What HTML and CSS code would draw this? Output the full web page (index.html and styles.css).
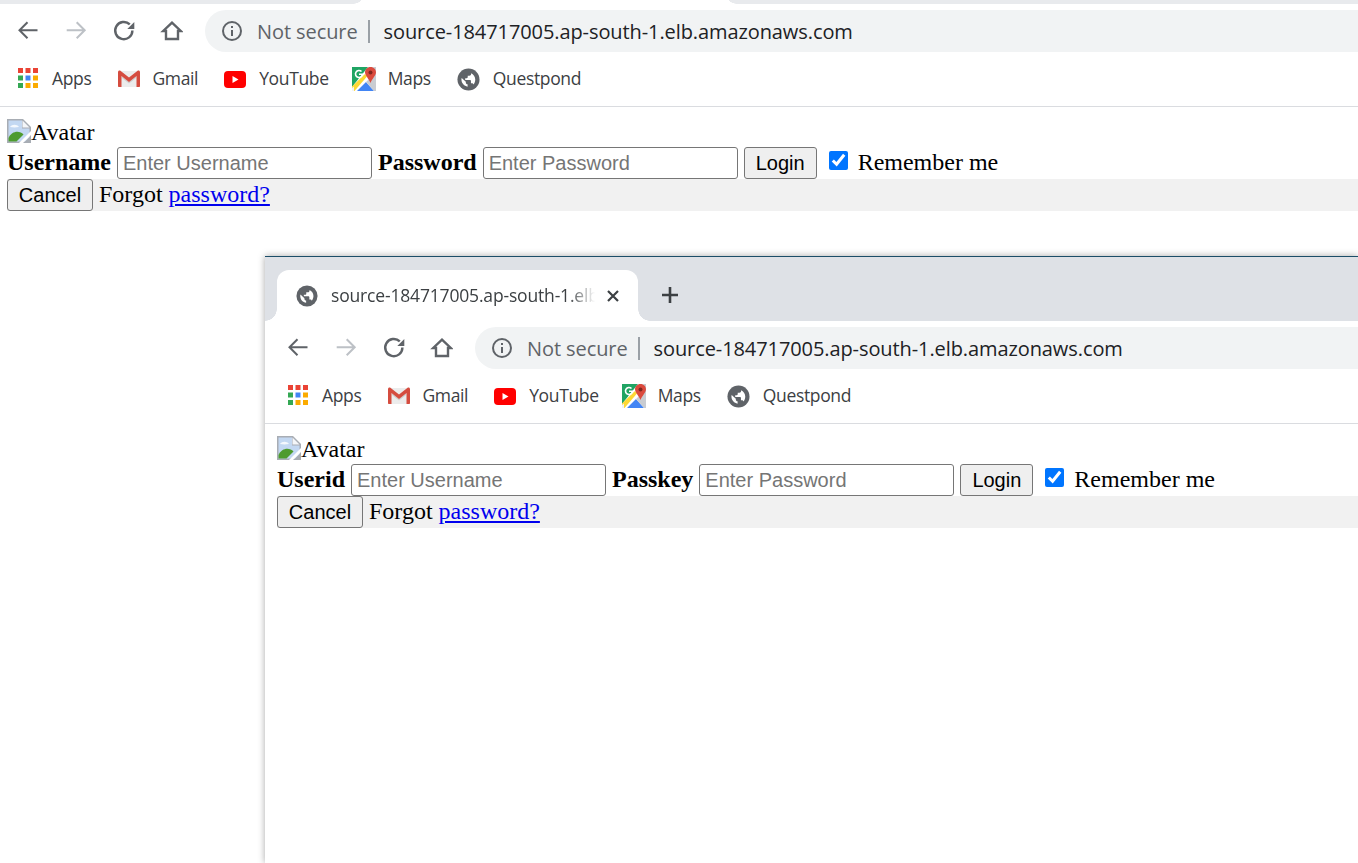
FILE: index.html
```html
<!DOCTYPE html>
<html lang="en">
<head>
<meta charset="utf-8">
<title>Login comparison</title>
<link rel="stylesheet" href="styles.css">
</head>
<body>
<svg class="sprites" aria-hidden="true">
  <symbol id="i-back" viewBox="0 0 24 24"><path d="M22.5 11.25H4.5M12.5 3.3l-8 7.95 8 7.95" fill="none" stroke="currentColor" stroke-width="2"/></symbol>
  <symbol id="i-forward" viewBox="0 0 24 24"><path d="M3.7 11.25h18M13.7 3.3l8 7.95-8 7.95" fill="none" stroke="currentColor" stroke-width="2"/></symbol>
  <symbol id="i-reload" viewBox="0 0 24 24"><path d="M21.400 11.500a8.600 8.600 0 1 1-2.600-6.100" fill="none" stroke="currentColor" stroke-width="2.400"/><path d="M23.300 3v7h-7z" fill="currentColor"/></symbol>
  <symbol id="i-home" viewBox="0 0 24 24"><path d="M13 3.600 4.200 12H7v8h12v-8h2.800z" fill="none" stroke="currentColor" stroke-width="2.400"/></symbol>
  <symbol id="i-info" viewBox="0 0 22 22"><circle cx="11" cy="11" r="9" fill="none" stroke="currentColor" stroke-width="2"/><path d="M10 10h2v6h-2zM10 6h2v2h-2z" fill="currentColor"/></symbol>
  <symbol id="i-globe" viewBox="0 0 24 24"><circle cx="12" cy="12" r="11.500" fill="currentColor"/><path transform="translate(2.400 2.400) scale(.8)" d="M10.800 21.300c-4.200-.6-8-4.200-8-9.300 0-.7.100-1.400.3-2.100L8.500 15v1.100c0 1.100.9 2.100 2.300 2.100zM18.500 18.500c-.3-.9-1.100-1.600-2.200-1.600h-1.100v-3.300c0-.6-.5-1.100-1.100-1.100H7.700v-2.200h2.200c.6 0 1.100-.5 1.100-1.100V7h2.200c1.200 0 2.200-1 2.200-2.200v-1.100c3 1.300 5.400 4.400 5.400 8.300 0 2.500-.9 4.700-2.300 6.500z" fill="#fff"/></symbol>
  <symbol id="i-apps" viewBox="0 0 20 20"><path fill="#ea4335" d="M0 0h5v5H0zM7.500 0h5v5h-5zM15 0h5v5h-5z"/><path fill="#34a853" d="M0 7.500h5v5H0zM0 15h5v5H0z"/><path fill="#4285f4" d="M7.500 7.500h5v5h-5z"/><path fill="#fbab00" d="M15 7.500h5v5h-5zM7.500 15h5v5h-5zM15 15h5v5h-5z"/></symbol>
  <symbol id="i-gmail" viewBox="0 0 22 18"><path fill="#ececec" d="M1 1h20v16H1z"/><path fill="#cfcfcf" d="M4 6l7 6 7-6v2l-7 5.500L4 8z"/><path fill="#d54c3f" d="M0 2.200C0 .7 1.500.2 2.700 1L11 7.500 19.300 1C20.500.2 22 .7 22 2.200V16c0 .6-.4 1-1 1h-2.500V6L11 12 3.500 6v11H1c-.6 0-1-.4-1-1z"/></symbol>
  <symbol id="i-youtube" viewBox="0 0 22 17"><rect width="22" height="17" rx="4" fill="#f00"/><path d="M8.500 5l6 3.500-6 3.500z" fill="#fff"/></symbol>
  <symbol id="i-maps" viewBox="0 0 24 24"><path fill="#1fa463" d="M0 0h16L0 20z"/><path fill="#4285f4" d="M5 24l9-9 8 9z"/><path fill="#c9ccd1" d="M16 0h8v24h-2l-8-9 6-6z"/><path fill="#fdd835" d="M0 19.500 13 7l2 2.500L2.500 24H0z"/><path fill="#f1f3f4" d="M0 21l2-1.500V24H0z"/><path fill="#db4a3d" d="M18.500 0c-3 0-5.500 2.400-5.500 5.300 0 3.500 4 6.500 5.500 10.700 1.500-4.200 5.500-7.200 5.500-10.700C24 2.400 21.500 0 18.500 0z"/><circle cx="18.500" cy="5.500" r="2" fill="#80261e"/><path fill="none" stroke="#fff" stroke-width="1.600" d="M9.500 4.500a3.500 3.500 0 1 0 1 2.700H7"/></symbol>
  <symbol id="i-image" viewBox="0 0 24 24"><path fill="#a8adb4" d="M0 0h16l8 8v16H0z"/><path fill="#c3d8f2" d="M1.500 1.500h13.500v8h7.500V18L18 22.500H1.500z"/><path fill="#f4f6f9" d="M15.500 1.500v7h7z"/><path fill="#f4f8fd" d="M3 8c2-3 7-3 9 0-3 .6-6 .6-9 0z"/><path fill="#4e9b2f" d="M1.500 22.500V19c3-7 11-8 15-3.500l-7 7z"/><path fill="#fff" d="M12 24l12-12v4l-8 8z"/></symbol>
</svg>

<section class="window window-back">
  <div class="tabstrip tabstrip-cropped"><div class="tab tab-cropped"></div></div>
  <div class="toolbar">
    <button class="nav"><svg class="nav-icon"><use href="#i-back"/></svg></button>
    <button class="nav nav-off"><svg class="nav-icon"><use href="#i-forward"/></svg></button>
    <button class="nav"><svg class="nav-icon"><use href="#i-reload"/></svg></button>
    <button class="nav"><svg class="nav-icon"><use href="#i-home"/></svg></button>
    <div class="omnibox">
      <svg class="info-icon"><use href="#i-info"/></svg>
      <span class="secure">Not secure</span>
      <span class="sep"></span>
      <span class="url">source-184717005.ap-south-1.elb.amazonaws.com</span>
    </div>
  </div>
  <nav class="bookmarks">
    <a class="mark"><svg class="m-apps"><use href="#i-apps"/></svg>Apps</a>
    <a class="mark"><svg class="m-gmail"><use href="#i-gmail"/></svg>Gmail</a>
    <a class="mark"><svg class="m-youtube"><use href="#i-youtube"/></svg>YouTube</a>
    <a class="mark"><svg class="m-maps"><use href="#i-maps"/></svg>Maps</a>
    <a class="mark"><svg class="m-globe"><use href="#i-globe"/></svg>Questpond</a>
  </nav>
  <main class="page">
    <div class="avatar"><svg class="broken"><use href="#i-image"/></svg>Avatar</div>
    <div class="fields">
      <b class="label">Username</b> <input class="text" type="text" placeholder="Enter Username"> <b class="label">Password</b> <input class="text" type="password" placeholder="Enter Password"> <button class="btn">Login</button> <label class="remember"><input class="check" type="checkbox" checked> <span class="remember-text">Remember me</span></label>
    </div>
    <div class="footer-row">
      <button class="btn btn-cancel">Cancel</button> <span class="forgot">Forgot <a class="link" href="#">password?</a></span>
    </div>
  </main>
</section>

<section class="window window-front">
  <div class="tabstrip">
    <div class="tab">
      <svg class="tab-globe"><use href="#i-globe"/></svg>
      <span class="tab-title">source-184717005.ap-south-1.elb.amazonaws.com</span>
      <svg class="tab-close" viewBox="0 0 12 12"><path d="M1 1l10 10M11 1 1 11" stroke="currentColor" stroke-width="2.200"/></svg>
    </div>
    <svg class="tab-new" viewBox="0 0 18 18"><path d="M9 1v16M1 9h16" stroke="currentColor" stroke-width="2.600"/></svg>
  </div>
  <div class="toolbar">
    <button class="nav"><svg class="nav-icon"><use href="#i-back"/></svg></button>
    <button class="nav nav-off"><svg class="nav-icon"><use href="#i-forward"/></svg></button>
    <button class="nav"><svg class="nav-icon"><use href="#i-reload"/></svg></button>
    <button class="nav"><svg class="nav-icon"><use href="#i-home"/></svg></button>
    <div class="omnibox">
      <svg class="info-icon"><use href="#i-info"/></svg>
      <span class="secure">Not secure</span>
      <span class="sep"></span>
      <span class="url">source-184717005.ap-south-1.elb.amazonaws.com</span>
    </div>
  </div>
  <nav class="bookmarks">
    <a class="mark"><svg class="m-apps"><use href="#i-apps"/></svg>Apps</a>
    <a class="mark"><svg class="m-gmail"><use href="#i-gmail"/></svg>Gmail</a>
    <a class="mark"><svg class="m-youtube"><use href="#i-youtube"/></svg>YouTube</a>
    <a class="mark"><svg class="m-maps"><use href="#i-maps"/></svg>Maps</a>
    <a class="mark"><svg class="m-globe"><use href="#i-globe"/></svg>Questpond</a>
  </nav>
  <main class="page">
    <div class="avatar"><svg class="broken"><use href="#i-image"/></svg>Avatar</div>
    <div class="fields">
      <b class="label">Userid</b> <input class="text" type="text" placeholder="Enter Username"> <b class="label">Passkey</b> <input class="text" type="password" placeholder="Enter Password"> <button class="btn">Login</button> <label class="remember"><input class="check" type="checkbox" checked> <span class="remember-text">Remember me</span></label>
    </div>
    <div class="footer-row">
      <button class="btn btn-cancel">Cancel</button> <span class="forgot">Forgot <a class="link" href="#">password?</a></span>
    </div>
  </main>
</section>
</body>
</html>
```
FILE: styles.css
```css
* { box-sizing: border-box; }
html, body { margin: 0; height: 100%; overflow: hidden; background: #fff; }
body { position: relative; }
.sprites { display: none; }

.window { position: absolute; background: #fff; display: flex; flex-direction: column; }
.window-back { left: -5px; right: 0; top: 0; }
.window-front {
  left: 265px; right: 0; top: 256px; bottom: 0;
  border-top: 1px solid #1b4d68;
  box-shadow: 0 0 7px rgba(0, 0, 0, .35);
}

.tabstrip { height: 64px; background: #dee1e6; display: flex; padding-top: 13px; padding-left: 12px; align-items: flex-start; }
.tabstrip-cropped { height: 4px; padding: 0 0 0 370px; background: #e8eaed; }

.tab {
  position: relative; width: 361px; height: 51px; background: #fff;
  border-radius: 12px 12px 0 0;
  display: flex; align-items: center; padding-left: 19px;
}
.tab-cropped { width: 360px; height: 4px; border-radius: 0; padding: 0; }
.tab::before, .tab::after { content: ""; position: absolute; bottom: 0; width: 12px; height: 12px; }
.tab::before { left: -12px; background: radial-gradient(circle at 0 0, transparent 11.5px, #fff 12px); }
.tab::after { right: -12px; background: radial-gradient(circle at 100% 0, transparent 11.5px, #fff 12px); }

.tab-globe { width: 22px; height: 22px; color: #5f6368; flex: none; }
.tab-title {
  margin: 0 0 2px 13px; width: 264px; overflow: hidden; white-space: nowrap;
  font: 17.500px "Open Sans", sans-serif; color: #3c4043; letter-spacing: -.17px;
  -webkit-mask-image: linear-gradient(to right, #000 90%, transparent 100%);
  mask-image: linear-gradient(to right, #000 90%, transparent 100%);
}
.tab-close { width: 12px; height: 12px; margin-left: 12px; color: #3c4043; flex: none; }
.tab-new { width: 18px; height: 18px; margin: 16px 0 0 23px; color: #3c4043; flex: none; }

.toolbar { display: flex; align-items: center; padding: 6px 0 0 8px; height: 48px; }
.nav { width: 48px; height: 42px; border: 0; background: none; padding: 0; color: #5f6368; display: flex; align-items: center; justify-content: center; }
.nav-off { color: #bdc1c6; }
.nav-icon { width: 24px; height: 24px; }

.omnibox {
  flex: 1; height: 42px; margin-left: 10px; background: #f1f3f4;
  border-radius: 21px 0 0 21px;
  display: flex; align-items: center; padding-left: 16px;
  font: 20px "Open Sans", sans-serif; letter-spacing: -.09px;
}
.info-icon { width: 22px; height: 22px; color: #5f6368; flex: none; }
.secure { margin-left: 14px; color: #5f6368; }
.sep { width: 2px; height: 23px; margin: 0 14px 0 10px; background: #9aa0a6; }
.url { color: #202124; }

.bookmarks { height: 55px; padding: 0 0 2px 23px; display: flex; align-items: center; border-bottom: 1px solid #dadce0; }
.mark { display: flex; align-items: center; font: 17.500px "Open Sans", sans-serif; color: #3c4043; letter-spacing: -.02em; }
.m-apps { width: 20px; height: 20px; margin-right: 14px; }
.m-gmail { width: 22px; height: 18px; margin: 2px 12px 0 27px; }
.m-youtube { width: 22px; height: 17px; margin: 2px 13px 0 26px; }
.m-maps { width: 24px; height: 24px; margin: 2px 12px 0 23px; }
.m-globe { width: 23px; height: 23px; margin: 2px 13px 0 26px; color: #5f6368; }

.page { padding: 12px 0 0 12px; font: 24px "Liberation Serif", serif; color: #000; }
.avatar { height: 28px; display: flex; align-items: flex-start; }
.broken { width: 24px; height: 24px; }
.fields { height: 32px; white-space: nowrap; display: flex; align-items: center; gap: 6px; }
.label { margin-bottom: 2px; }
.text {
  width: 255px; height: 32px; padding: 1px 5px; margin: 0;
  border: 1px solid #767676; border-radius: 3px; background: #fff;
  font: 20px "Liberation Sans", sans-serif;
}
.text::placeholder { color: #757575; opacity: 1; }
.btn {
  height: 32px; width: 73px; padding: 0; margin: 0;
  border: 1px solid #767676; border-radius: 3px; background: #efefef; color: #000;
  font: 20px "Liberation Sans", sans-serif;
}
.btn-cancel { width: 86px; }
.remember { display: flex; align-items: center; gap: 10px; margin-left: 6px; }
.remember-text { margin-bottom: 2px; }
.check { width: 19px; height: 19px; margin: 0 0 5px; accent-color: #0075ff; }
.footer-row { height: 32px; background: #f1f1f1; display: flex; align-items: center; gap: 6px; }
.forgot { margin-bottom: 2px; }
.link { color: #00e; text-decoration: underline; }
```
